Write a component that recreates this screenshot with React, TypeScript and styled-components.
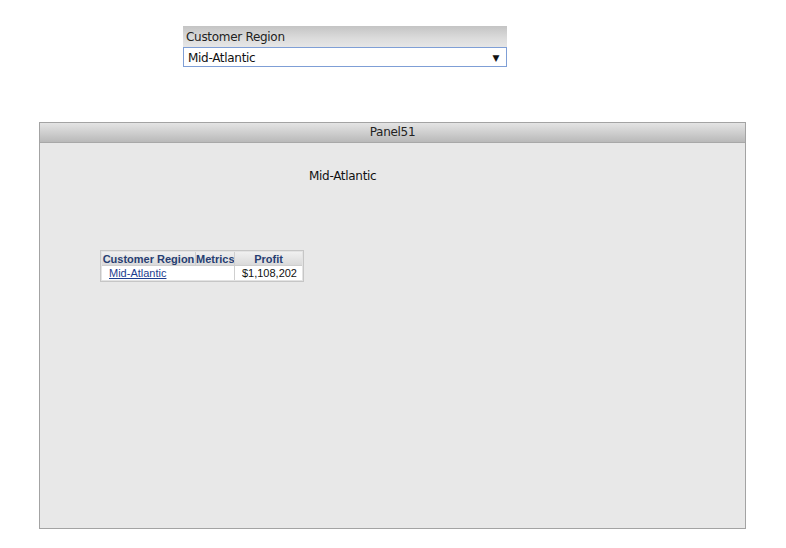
import React from "react";
import styled, { createGlobalStyle } from "styled-components";

const GlobalStyle = createGlobalStyle`
  html, body {
    margin: 0;
    padding: 0;
    background: #ffffff;
  }
  body {
    font-family: Tahoma, "DejaVu Sans", "Liberation Sans", sans-serif;
  }
`;

const Page = styled.div`
  display: flex;
  flex-direction: column;
  padding-top: 26px;
`;

const Selector = styled.div`
  margin-left: 183px;
  width: 324px;
  display: flex;
  flex-direction: column;
`;

const SelectorTitle = styled.div`
  height: 19px;
  line-height: 19px;
  padding: 2px 0 0 3px;
  font-size: 12px;
  letter-spacing: -0.3px;
  color: #222;
  background: linear-gradient(to bottom, #c4c4c4 0%, #dcdcdc 60%, #e6e6e6 100%);
`;

const SelectBox = styled.div`
  box-sizing: border-box;
  height: 20px;
  border: 1px solid #7f9fd6;
  background: #fff;
  display: flex;
  align-items: center;
  justify-content: space-between;
  padding: 1px 7px 0 4px;
  font-size: 12px;
  letter-spacing: -0.3px;
  color: #111;
`;

const Caret = styled.span`
  font-size: 9px;
  color: #111;
`;

const Panel = styled.div`
  margin-top: 55px;
  margin-left: 39px;
  width: 705px;
  height: 405px;
  border: 1px solid #a3a3a3;
  background: #e8e8e8;
  display: flex;
  flex-direction: column;
`;

const PanelTitle = styled.div`
  height: 19px;
  line-height: 19px;
  text-align: center;
  font-size: 12px;
  letter-spacing: -0.3px;
  color: #222;
  border-bottom: 1px solid #a8a8a8;
  background: linear-gradient(to bottom, #e4e4e4 0%, #cfcfcf 50%, #b9b9b9 100%);
`;

const PanelBody = styled.div`
  display: flex;
  flex-direction: column;
  padding-top: 26px;
`;

const Heading = styled.div`
  margin-left: 269px;
  font-size: 12px;
  letter-spacing: -0.3px;
  color: #111;
  height: 14px;
  line-height: 14px;
`;

const Grid = styled.table`
  box-sizing: border-box;
  width: 204px;
  margin-top: 67px;
  margin-left: 60px;
  border: 1px solid #c6c6c6;
  background: #e3e3e3;
  border-collapse: separate;
  border-spacing: 0;
  padding: 1px;
  font-family: "Liberation Sans", Arial, sans-serif;
  font-size: 11px;
  table-layout: fixed;
`;

const HeadCell = styled.th`
  height: 13px;
  padding: 0;
  font-weight: bold;
  color: #273e72;
  white-space: nowrap;
  overflow: hidden;
  text-align: center;
  border-right: 1px solid #cfcfcf;
  background: linear-gradient(to bottom, #f0f0f0 0%, #dadada 100%);
  &:last-child {
    border-right: none;
  }
`;

const Cell = styled.td<{ $right?: boolean }>`
  height: 14px;
  padding: ${(p) => (p.$right ? "0 5px 0 0" : "0 0 0 7px")};
  background: #fff;
  color: #111;
  white-space: nowrap;
  text-align: ${(p) => (p.$right ? "right" : "left")};
  border-top: 1px solid #cfcfcf;
  border-right: 1px solid #cfcfcf;
  &:last-child {
    border-right: none;
  }
`;

const Link = styled.a`
  color: #1d3d8f;
  text-decoration: underline;
`;

const App = () => {
  return (
    <>
      <GlobalStyle />
      <Page>
        <Selector>
          <SelectorTitle>Customer Region</SelectorTitle>
          <SelectBox>
            <span>Mid-Atlantic</span>
            <Caret>▼</Caret>
          </SelectBox>
        </Selector>
        <Panel>
          <PanelTitle>Panel51</PanelTitle>
          <PanelBody>
            <Heading>Mid-Atlantic</Heading>
            <div>
              <Grid>
                <colgroup>
                  <col style={{ width: 94 }} />
                  <col style={{ width: 39 }} />
                  <col />
                </colgroup>
                <thead>
                  <tr>
                    <HeadCell>Customer Region</HeadCell>
                    <HeadCell>Metrics</HeadCell>
                    <HeadCell>Profit</HeadCell>
                  </tr>
                </thead>
                <tbody>
                  <tr>
                    <Cell colSpan={2}>
                      <Link href="#">Mid-Atlantic</Link>
                    </Cell>
                    <Cell $right>$1,108,202</Cell>
                  </tr>
                </tbody>
              </Grid>
            </div>
          </PanelBody>
        </Panel>
      </Page>
    </>
  );
};

export default App;
